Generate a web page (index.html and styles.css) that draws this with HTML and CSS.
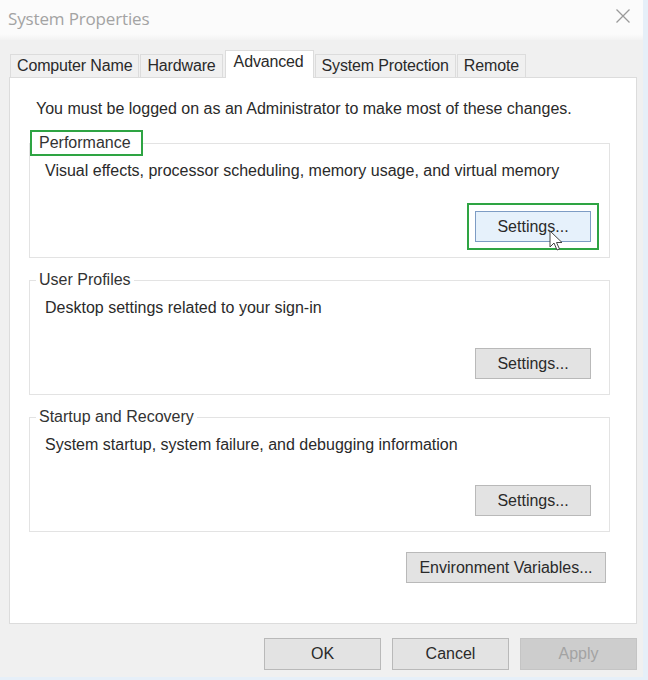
FILE: index.html
```html
<!DOCTYPE html>
<html>
<head>
<meta charset="utf-8">
<link rel="stylesheet" href="styles.css">
</head>
<body>
<div class="window">
  <div class="titlebar">
    <span class="title">System Properties</span>
    <svg class="close" width="16" height="16" viewBox="0 0 16 16"><path d="M1.5 1.5 L14.5 14.5 M14.5 1.5 L1.5 14.5" stroke="#9a9a9a" stroke-width="1.3" fill="none"/></svg>
  </div>
  <div class="main">
    <div class="tabs">
      <div class="tab">Computer Name</div>
      <div class="tab">Hardware</div>
      <div class="tab active">Advanced</div>
      <div class="tab">System Protection</div>
      <div class="tab">Remote</div>
    </div>
    <div class="panel">
      <p class="intro">You must be logged on as an Administrator to make most of these changes.</p>
      <fieldset class="group">
        <legend class="legend marked">Performance</legend>
        <p class="desc">Visual effects, processor scheduling, memory usage, and virtual memory</p>
        <div class="row"><button class="btn hover">Settings...<svg class="cursor" width="14" height="22" viewBox="0 0 14 22"><path d="M1 1 L1 17 L5 13 L8 20 L10.5 19 L7.5 12.5 L13 12.5 Z" fill="#ffffff" stroke="#444" stroke-width="1" stroke-linejoin="round"/></svg></button></div>
      </fieldset>
      <fieldset class="group">
        <legend class="legend">User Profiles</legend>
        <p class="desc">Desktop settings related to your sign-in</p>
        <div class="row"><button class="btn">Settings...</button></div>
      </fieldset>
      <fieldset class="group">
        <legend class="legend">Startup and Recovery</legend>
        <p class="desc">System startup, system failure, and debugging information</p>
        <div class="row"><button class="btn">Settings...</button></div>
      </fieldset>
      <div class="row env-row"><button class="btn env">Environment Variables...</button></div>
    </div>
    <div class="footer">
      <button class="btn dlg">OK</button>
      <button class="btn dlg">Cancel</button>
      <button class="btn dlg disabled">Apply</button>
    </div>
  </div>
</div>
</body>
</html>
```
FILE: styles.css
```css
* { box-sizing: border-box; }
html, body { margin: 0; padding: 0; }
body {
  width: 648px;
  height: 680px;
  overflow: hidden;
  background: #e6eff8;
  font-family: "Liberation Sans", Arial, sans-serif;
  font-size: 16px;
  color: #2a2a2a;
}
.window {
  width: 643px;
  height: 677px;
  background: #f0f0f0;
  display: flex;
  flex-direction: column;
}
.titlebar {
  height: 40px;
  flex: none;
  background: linear-gradient(#fbfbfb 0, #fbfbfb 34px, #f2f2f2 40px);
  display: flex;
  align-items: center;
  justify-content: space-between;
  padding: 0 12px 4px 8px;
}
.title {
  font-family: "Open Sans", "Noto Sans", sans-serif;
  font-size: 17px;
  color: #a3a3a3;
  letter-spacing: -0.15px;
}
.close { display: block; margin-top: -4px; }
.main {
  flex: 1;
  display: flex;
  flex-direction: column;
  padding: 10px 6px 0 9px;
}
.tabs {
  height: 27px;
  display: flex;
  align-items: flex-end;
  padding-left: 1px;
  position: relative;
  z-index: 1;
}
.tab {
  height: 23px;
  padding: 0 6px;
  line-height: 22px;
  background: #f0f0f0;
  border: 1px solid #dcdcdc;
  border-bottom: none;
  margin-right: 1px;
  white-space: nowrap;
  letter-spacing: -0.15px;
}
.tab.active {
  height: 28px;
  margin: 0 1px -1px 1px;
  background: #ffffff;
  line-height: 22px;
  padding: 0 9px 0 8px;
  position: relative;
}
.panel {
  height: 547px;
  background: #ffffff;
  border: 1px solid #dcdcdc;
  padding: 22px 26px 0 19px;
  display: flex;
  flex-direction: column;
}
.intro {
  margin: 0 0 12px 7px;
  line-height: 18px;
  white-space: nowrap;
}
.group {
  margin: 0 0 9px 0;
  padding: 6px 18px 15px 15px;
  border: 1px solid #e3e3e3;
  min-width: 0;
}
.legend {
  margin-left: -9px;
  padding: 4px 3px;
  line-height: 18px;
  color: #333;
}
.legend.marked {
  margin-left: -15px;
  padding: 2px 10px 2px 7px;
  border: 2px solid #2ea443;
}
.desc {
  margin: 0;
  line-height: 18px;
  white-space: nowrap;
}
.row {
  display: flex;
  justify-content: flex-end;
  margin-top: 31px;
}
.btn {
  font-family: "Liberation Sans", Arial, sans-serif;
  font-size: 16px;
  color: #2a2a2a;
  width: 116px;
  height: 31px;
  padding: 0;
  background: #e3e3e3;
  border: 1px solid #b9b9b9;
  position: relative;
}
.btn.hover {
  background: #e6f1fb;
  border-color: #7d9cc4;
  outline: 2px solid #2ea443;
  outline-offset: 6px;
}
.cursor {
  position: absolute;
  left: 73px;
  top: 18px;
}
.env-row { margin-top: 11px; padding-right: 4px; }
.btn.env { width: 200px; }
.footer {
  display: flex;
  justify-content: flex-end;
  gap: 11px;
  margin-top: 14px;
}
.btn.dlg { width: 117px; height: 32px; }
.btn.disabled {
  background: #cdcdcd;
  border-color: #c4c4c4;
  color: #a3a3a3;
}
```
